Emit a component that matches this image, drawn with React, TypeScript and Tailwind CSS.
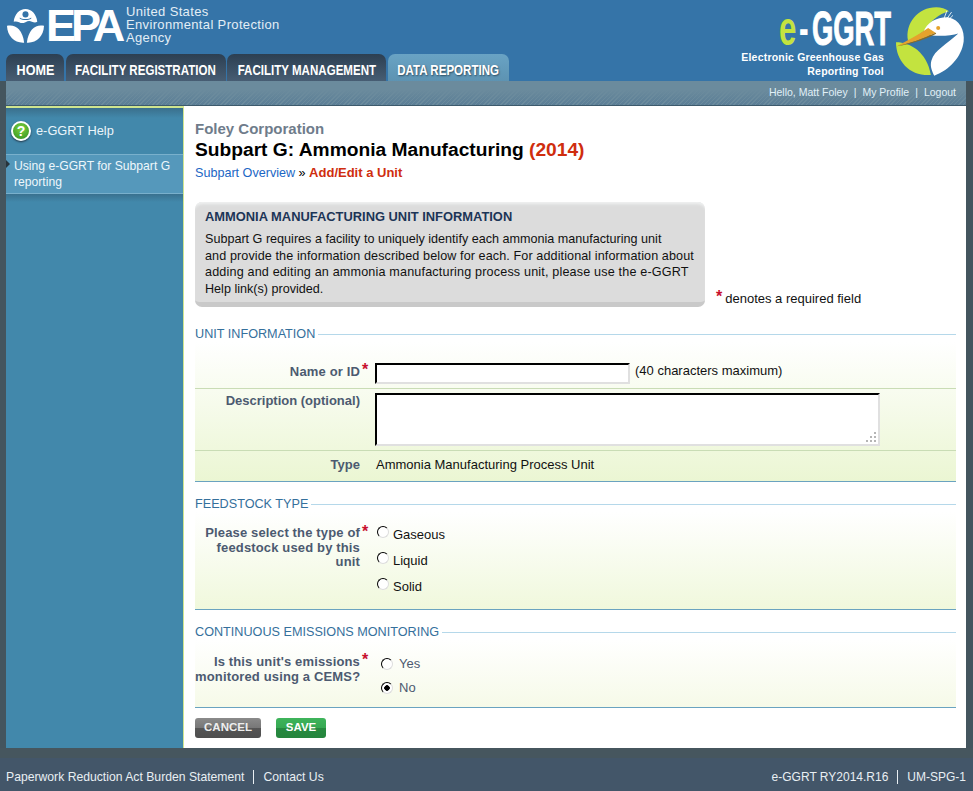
import React from "react";

const F = "[font-family:'Liberation_Sans',Arial,sans-serif]";

function EpaMark() {
  return (
    <svg viewBox="20 25 110 104" className="w-[37px] h-[35px] shrink-0" aria-hidden>
      <path fill="#fff" d="M40 66c2-22 17-38 35-38s33 16 35 38c-6 4-10 2-16 0-6-3-11-3-19 1-8 4-13 3-19 0-6-2-10-3-16-1z" />
      <circle cx="75" cy="44" r="9" fill="#3574a8" />
      <path fill="#3574a8" d="M58 53c6 6 28 6 34 0v4c-8 5-26 5-34 0z" />
      <path fill="#fff" d="M20 78c22-6 46 8 51 50-28 2-50-18-51-50z" />
      <path fill="#fff" d="M130 78c-22-6-46 8-51 50 28 2 50-18 51-50z" />
    </svg>
  );
}

function Heron() {
  return (
    <svg viewBox="580 15 215 215" className="w-[72px] h-[72px] shrink-0" aria-hidden>
      <path fill="#c3e33f" d="M622 122c-10-52 30-100 84-100 14 0 28 4 38 12-30 8-56 30-66 52-18 14-36 28-56 36z" />
      <path fill="#c3e33f" d="M586 126c44 0 92 30 104 98-62 4-104-40-104-98z" />
      <path fill="#fff" d="M668 96C678 66 710 50 744 52 775 58 792 90 788 124 782 170 745 210 700 226 690 205 688 195 692 180 700 150 738 132 772 100 745 108 690 112 668 96z" />
      <path stroke="#fff" strokeWidth="2.5" fill="none" d="M730 54l8-22M738 56l14-20M744 58l12-12" />
      <path fill="#e5a22c" d="M588 138c32-16 62-32 94-54l22 14c-36 18-78 32-116 40z" />
      <path fill="#8a6a1e" d="M588 138c40-8 80-22 116-40l2 3c-40 20-80 32-118 37z" />
      <circle cx="712" cy="84" r="6" fill="#e5a22c" />
    </svg>
  );
}

function Tab({ label, w, scale, active }: { label: string; w: string; scale: string; active?: boolean }) {
  return (
    <div
      className={`${w} h-[27px] rounded-t-[7px] flex items-center justify-center text-white font-bold text-[15px] whitespace-nowrap ${
        active
          ? "bg-[linear-gradient(#69a3c4,#5d93b2)] [text-shadow:1px_1px_2px_#2c4c60]"
          : "bg-[linear-gradient(#2c3f52,#475d73)]"
      }`}
    >
      <span className={`inline-block ${scale} pt-[5px]`}>{label}</span>
    </div>
  );
}

function Section({ title }: { title: string }) {
  return (
    <div className="flex items-center h-[16px] gap-[3px] text-[12.65px] text-[#35709c]">
      <span className="whitespace-nowrap">{title}</span>
      <span className="flex-1 h-px bg-[#b5d8ea]" />
    </div>
  );
}

function Star() {
  return <span className="text-[#c8102e] font-bold text-[16px] leading-[12px] w-[15px] shrink-0 pl-[2px]">*</span>;
}

const radioClass =
  "appearance-none w-[12px] h-[12px] rounded-full bg-white border border-t-black border-l-black border-r-[#ddd] border-b-[#ddd] shrink-0 checked:bg-[radial-gradient(circle,#000_0,#000_2.5px,#fff_3px)]";

function Radio({ label, checked, name, cls, tone }: { label: string; checked?: boolean; name: string; cls: string; tone: string }) {
  return (
    <label className={`flex ${cls} text-[13px] ${tone}`}>
      <input type="radio" name={name} defaultChecked={checked} className={radioClass} />
      <span>{label}</span>
    </label>
  );
}

const label = "w-[165px] text-right font-bold text-[#4c5a70] text-[13px] shrink-0";

export default function App() {
  return (
    <div className={`${F} w-[973px] h-[791px] overflow-hidden flex flex-col bg-[#44555e] text-[12px] text-black`}>
      {/* header */}
      <header className="h-[81px] bg-[#3574a8] flex flex-col shrink-0">
        <div className="flex-1 min-h-0 flex justify-between">
          <div className="flex h-[54px] pl-[7px] pt-[8px] items-start">
            <EpaMark />
            <div className="w-[81px] h-[35px] pl-[2px] text-white font-bold text-[45px] leading-[36px] tracking-[-5px]">
              EPA
            </div>
            <div className="ml-[1px] -mt-[3px] text-[13px] leading-[13px] tracking-[0.35px] text-[#e3eef6]">
              <div>United States</div>
              <div>Environmental Protection</div>
              <div>Agency</div>
            </div>
          </div>
          <div className="flex items-start pr-[7px] pt-[5px] h-[76px] z-10">
            <div className="flex flex-col items-end mr-[2px]">
              <div className="flex h-[45px] w-[113px] items-center font-bold text-[48px] leading-[36px]">
                <span className="w-[20px] shrink-0 text-[#c3e33f] inline-block origin-left scale-x-[0.65] pt-[3px]">e</span>
                <span className="w-[13px] shrink-0 text-white inline-block origin-left scale-x-[0.6] pt-[3px]">-</span>
                <span className="w-[80px] shrink-0 text-white inline-block origin-left scale-x-[0.57] pt-[3px] whitespace-nowrap [-webkit-text-stroke:1px_#fff]">GGRT</span>
              </div>
              <div className="text-white font-bold text-[10.5px] leading-[14px] text-right tracking-[0.2px] whitespace-nowrap mr-[8px]">
                <div>Electronic Greenhouse Gas</div>
                <div>Reporting Tool</div>
              </div>
            </div>
            <Heron />
          </div>
        </div>
        <nav className="flex h-[27px] pl-[6px] gap-[1.5px] -mt-[27px] w-[520px]">
          <Tab label="HOME" w="w-[58px]" scale="scale-x-[0.84]" />
          <Tab label="FACILITY REGISTRATION" w="w-[160px]" scale="scale-x-[0.77]" />
          <Tab label="FACILITY MANAGEMENT" w="w-[159px]" scale="scale-x-[0.77]" />
          <Tab label="DATA REPORTING" w="w-[121px]" scale="scale-x-[0.77]" active />
        </nav>
      </header>

      {/* strip */}
      <div className="mx-[6px] w-[960px] h-[25px] shrink-0 border-b border-[#3d5a6c] flex items-center justify-end pr-[10px] text-[10.5px] text-[#e0f0f8] bg-[linear-gradient(#6b8b9d_0,#6b8b9d_35%,rgba(107,139,157,0)_100%),repeating-linear-gradient(135deg,#6b8b9d_0,#6b8b9d_1px,#5b7e96_1px,#5b7e96_3px)]">
        <span>Hello, Matt Foley</span>
        <span className="mx-[6px]">|</span>
        <span>My Profile</span>
        <span className="mx-[6px]">|</span>
        <span>Logout</span>
      </div>

      {/* body */}
      <div className="mx-[6px] w-[960px] h-[642px] shrink-0 flex bg-white">
        <aside className="w-[178px] shrink-0 border-t-2 border-r border-[#cfe58f] bg-[linear-gradient(#3f85a8,#4a8cad)] flex flex-col">
          <div className="h-[46px] flex items-center pl-[5px] gap-[5px] text-white text-[12.8px] bg-[linear-gradient(#3a6f8c_0,#4288ab_10px,#4288ab_100%)]">
            <span className="w-[20px] h-[20px] rounded-full border-2 border-white bg-[radial-gradient(circle_at_50%_35%,#7fd03f,#2f9020)] text-white font-bold text-[14px] leading-[16px] text-center shadow-[0_1px_2px_#234]">
              ?
            </span>
            <span className="text-[#eaf5fa]">e-GGRT Help</span>
          </div>
          <div className="relative h-[40px] bg-[#5598bb] border-y border-[#79b0cc] pl-[8px] pr-[4px] pt-[3px] text-[12.15px] leading-[16px] text-[#eef7fb]">
            <span className="absolute left-0 top-[5px] w-0 h-0 border-y-[4px] border-y-transparent border-l-[4px] border-l-[#27343c]" />
            Using e-GGRT for Subpart G reporting
          </div>
          <div className="flex-1 bg-[linear-gradient(#39718f_0,#4288ab_8px,#4288ab_100%)]" />
        </aside>

        <main className="flex-1 min-w-0 pl-[11px] pr-[10px] pt-[14px] flex flex-col">
          <div className="text-[15px] leading-[18px] font-bold text-[#6f7c8b]">Foley Corporation</div>
          <h1 className="text-[19.2px] leading-[24px] font-bold text-black">
            Subpart G: Ammonia Manufacturing <span className="text-[#cf2d0e]">(2014)</span>
          </h1>
          <div className="text-[12.6px] leading-[16px] mt-[3px]">
            <span className="text-[#1b66c4]">Subpart Overview</span> <span>»</span>{" "}
            <span className="font-bold text-[13px] text-[#cf2d0e]">Add/Edit a Unit</span>
          </div>

          <div className="flex items-end mt-[21px]">
            <div className="w-[510px] h-[105px] rounded-[7px] bg-[#dcdcdc] border-b-[5px] border-[#c9c9c9] shadow-[inset_0_4px_3px_-2px_#f0f2f2] px-[10px] pt-[7px] shrink-0">
              <div className="font-bold text-[12.9px] leading-[16px] text-[#1c3557] whitespace-nowrap">AMMONIA MANUFACTURING UNIT INFORMATION</div>
              <p className="mt-[6px] text-[12.6px] leading-[16.6px] text-[#111] whitespace-nowrap">
                Subpart G requires a facility to uniquely identify each ammonia manufacturing unit<br />
                <span className="tracking-[0.1px]">and provide the information described below for each. For additional information about</span><br />
                <span className="tracking-[0.17px]">adding and editing an ammonia manufacturing process unit, please use the e-GGRT</span><br />
                Help link(s) provided.
              </p>
            </div>
            <div className="flex ml-[11px] text-[13px] text-[#111] whitespace-nowrap">
              <span className="text-[#c8102e] font-bold text-[16px] leading-[12px] mr-[3px]">*</span>
              <span className="leading-[16px]">denotes a required field</span>
            </div>
          </div>

          <div className="mt-[19px]"><Section title="UNIT INFORMATION" /></div>
          <div className="bg-[linear-gradient(#fff_0,#ebf6d3_100%)] border-b border-[#6aa3c0]">
            <div className="h-[47px] pt-[22px] flex border-b border-[#c9dcb5]">
              <div className={`${label} leading-[16px] tracking-[0.15px]`}>Name or ID</div>
              <Star />
              <input aria-label="Name or ID" className="w-[255px] h-[21px] -mt-[1px] bg-white border-2 border-t-black border-l-black border-r-[#e0e0e0] border-b-[#e0e0e0] outline-none" />
              <span className="ml-[5px] -mt-[1px] text-[13px] leading-[16px] text-[#111]">(40 characters maximum)</span>
            </div>
            <div className="h-[62px] pt-[4px] flex border-b border-[#c9dcb5]">
              <div className={`${label} leading-[16px]`}>Description (optional)</div>
              <div className="w-[15px] shrink-0" />
              <div className="relative w-[505px] h-[53px] bg-white border-2 border-t-black border-l-black border-r-[#e0e0e0] border-b-[#e0e0e0]">
                <svg viewBox="0 0 12 12" className="absolute right-[1px] bottom-[1px] w-[12px] h-[12px]" aria-hidden>
                  <path fill="#b5b5b5" d="M9 1h2v2H9zM5 5h2v2H5zM9 5h2v2H9zM1 9h2v2H1zM5 9h2v2H5zM9 9h2v2H9z" />
                </svg>
              </div>
            </div>
            <div className="h-[30px] pt-[6px] flex">
              <div className={`${label} leading-[16px]`}>Type</div>
              <div className="w-[16px] shrink-0" />
              <span className="text-[13px] leading-[16px] text-[#111]">Ammonia Manufacturing Process Unit</span>
            </div>
          </div>

          <div className="mt-[14px]"><Section title="FEEDSTOCK TYPE" /></div>
          <div className="h-[98px] pt-[14px] flex bg-[linear-gradient(#fff_0,#f0f8dc_100%)] border-b border-[#6aa3c0]">
            <div className={`${label} leading-[14.7px] tracking-[0.15px]`}>Please select the type of feedstock used by this unit</div>
            <Star />
            <div className="flex flex-col gap-[10px]">
              {["Gaseous", "Liquid", "Solid"].map((l) => (
                <Radio key={l} label={l} name="feed" cls="h-[16px] items-start gap-[4px]" tone="text-[#111] [&>span]:leading-[16px] [&>span]:pt-[1px] [&>input]:ml-[2px]" />
              ))}
            </div>
          </div>

          <div className="mt-[14px]"><Section title="CONTINUOUS EMISSIONS MONITORING" /></div>
          <div className="h-[68px] pt-[14px] flex bg-[linear-gradient(#fff_0,#f6fae8_100%)] border-b border-[#6aa3c0]">
            <div className={`${label} leading-[15px] whitespace-nowrap tracking-[0.15px]`}>
              Is this unit's emissions<br />monitored using a CEMS?
            </div>
            <Star />
            <div className="flex flex-col gap-[8px] pl-[6px] pt-[2px]">
              <Radio label="Yes" name="cems" cls="h-[16px] items-center gap-[6px]" tone="text-[#4c5a70]" />
              <Radio label="No" name="cems" checked cls="h-[16px] items-center gap-[6px]" tone="text-[#4c5a70]" />
            </div>
          </div>

          <div className="flex mt-[10px] gap-[15px]">
            <button className="w-[66px] h-[20px] rounded-[3px] font-bold text-[11.5px] text-[#eee] bg-[linear-gradient(#8a8a8a_0,#777_50%,#555_50%,#4e4e4e_100%)]">CANCEL</button>
            <button className="w-[50px] h-[20px] rounded-[3px] font-bold text-[11.5px] text-white bg-[linear-gradient(#3eb45b_0,#36a852_50%,#268a3f_50%,#25853d_100%)]">SAVE</button>
          </div>
        </main>
      </div>

      {/* footer */}
      <footer className="flex-1 min-h-0 flex flex-col">
        <div className="h-[10px] bg-[#46565e] shrink-0" />
        <div className="flex-1 bg-[#435669] flex items-center justify-between pl-[6px] pr-[7px] text-[12.2px] text-[#e9eff3] pt-[5px]">
          <div className="flex items-center">
            <span>Paperwork Reduction Act Burden Statement</span>
            <span className="w-px h-[14px] bg-[#e9eff3] mx-[9px]" />
            <span>Contact Us</span>
          </div>
          <div className="flex items-center text-[12px]">
            <span>e-GGRT RY2014.R16</span>
            <span className="w-px h-[14px] bg-[#e9eff3] mx-[9px]" />
            <span>UM-SPG-1</span>
          </div>
        </div>
      </footer>
    </div>
  );
}
